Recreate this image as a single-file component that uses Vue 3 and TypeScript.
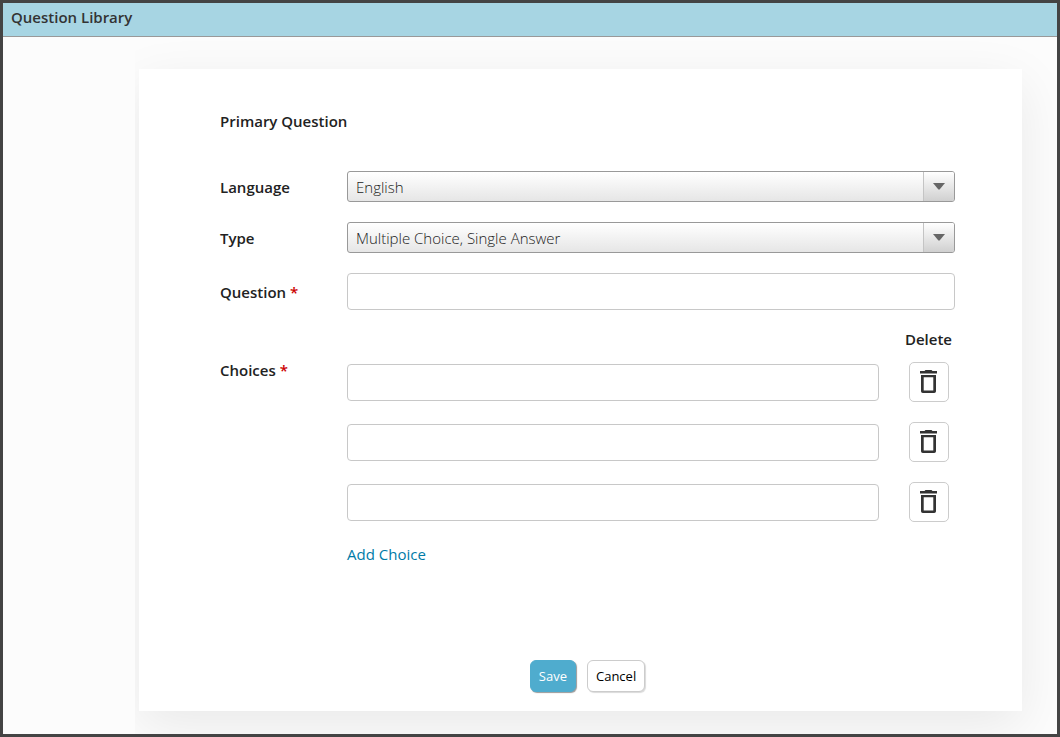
<script setup lang="ts">
import { ref } from 'vue'

interface Choice {
  id: number
  text: string
}

const languages: string[] = ['English', 'French', 'Spanish']
const types: string[] = ['Multiple Choice, Single Answer', 'Multiple Choice, Multiple Answers', 'Free Text']

const language = ref(languages[0])
const questionType = ref(types[0])
const question = ref('')
const choices = ref<Choice[]>([
  { id: 1, text: '' },
  { id: 2, text: '' },
  { id: 3, text: '' },
])
let nextId = 4

function addChoice(): void {
  choices.value.push({ id: nextId++, text: '' })
}

function removeChoice(id: number): void {
  choices.value = choices.value.filter((choice) => choice.id !== id)
}
</script>

<template>
  <div class="window">
    <header class="bar">
      <h1 class="bar-title">Question Library</h1>
    </header>
    <main class="stage">
      <form class="card" @submit.prevent>
        <h2 class="section-title">Primary Question</h2>

        <div class="row">
          <label class="label" for="language">Language</label>
          <div class="select">
            <select id="language" v-model="language">
              <option v-for="item in languages" :key="item">{{ item }}</option>
            </select>
            <span class="arrow" aria-hidden="true">
              <svg width="12" height="7" viewBox="0 0 12 7"><path d="M0 0h12L6.6 6.6h-1.2z" fill="#666" /></svg>
            </span>
          </div>
        </div>

        <div class="row">
          <label class="label" for="type">Type</label>
          <div class="select">
            <select id="type" v-model="questionType">
              <option v-for="item in types" :key="item">{{ item }}</option>
            </select>
            <span class="arrow" aria-hidden="true">
              <svg width="12" height="7" viewBox="0 0 12 7"><path d="M0 0h12L6.6 6.6h-1.2z" fill="#666" /></svg>
            </span>
          </div>
        </div>

        <div class="row">
          <label class="label" for="question">Question <span class="required">*</span></label>
          <input id="question" v-model="question" class="text" type="text" required />
        </div>

        <div class="row choices">
          <span id="choices-label" class="label choices-label">Choices <span class="required">*</span></span>
          <div class="choice-list" role="group" aria-labelledby="choices-label">
            <div class="choice">
              <span class="delete-head">Delete</span>
            </div>
            <div v-for="(choice, index) in choices" :key="choice.id" class="choice">
              <input v-model="choice.text" class="text" type="text" :aria-label="`Choice ${index + 1}`" />
              <button
                class="delete"
                type="button"
                :aria-label="`Delete choice ${index + 1}`"
                @click="removeChoice(choice.id)"
              >
                <svg width="18" height="24" viewBox="0 0 18 24" fill="#333">
                  <path d="M0 1h4.500l1-1h6l1 1H17v2.600H0z" />
                  <path
                    fill-rule="evenodd"
                    d="M1 5h15v16.200a1.800 1.800 0 0 1-1.800 1.800H2.800A1.800 1.800 0 0 1 1 21.200zM3.700 7.300v13.200h9.600V7.300z"
                  />
                </svg>
              </button>
            </div>
            <a class="add" href="#" @click.prevent="addChoice">Add Choice</a>
          </div>
        </div>

        <div class="actions">
          <button class="button primary" type="submit">Save</button>
          <button class="button" type="button">Cancel</button>
        </div>
      </form>
    </main>
  </div>
</template>

<style>
body {
  margin: 0;
}
</style>

<style scoped>
.window,
.window * {
  box-sizing: border-box;
}

.window {
  display: flex;
  flex-direction: column;
  min-height: 100vh;
  border: 3px solid #444;
  background: #fcfcfc;
  color: #333;
  font-family: 'Segoe UI', 'Open Sans', 'Noto Sans', sans-serif;
  font-size: 15px;
  line-height: 24px;
}

.bar {
  height: 34px;
  padding: 2px 8px;
  border-bottom: 1px solid #999;
  background: #a7d5e3;
}

.bar-title,
.section-title {
  margin: 0;
  font-size: 15px;
  font-weight: 600;
}

.stage {
  flex: 1;
  margin-left: 132px;
  padding: 32px 35px 23px 4px;
  overflow: hidden;
}

.card {
  padding: 40px 67px 19px 81px;
  background: #fff;
  box-shadow: 0 15px 50px rgba(0, 0, 0, 0.08);
}

.section-title {
  margin-bottom: 38px;
  font-weight: 700;
}

.row {
  display: grid;
  grid-template-columns: 127px 1fr;
  align-items: center;
  margin-bottom: 20px;
}

.section-title,
.label,
.delete-head {
  font-weight: 600;
  color: #222;
}

.required {
  color: #c00;
}

.select {
  position: relative;
}

.select select {
  display: block;
  width: 100%;
  height: 31px;
  padding: 0 40px 0 8px;
  border: 1px solid #999;
  border-radius: 3px;
  appearance: none;
  background: linear-gradient(#fff, #e6e6e6);
  color: #222;
  font: inherit;
  font-weight: 300;
}

.arrow {
  position: absolute;
  top: 1px;
  right: 1px;
  bottom: 1px;
  display: flex;
  align-items: center;
  justify-content: center;
  width: 31px;
  border-left: 1px solid #c4c4c4;
  border-radius: 0 2px 2px 0;
  background: linear-gradient(#fff, #d0d0d0);
  pointer-events: none;
}

.text {
  width: 100%;
  height: 37px;
  padding: 0 8px;
  border: 1px solid #c8c8c8;
  border-radius: 4px;
  background: #fff;
  color: #333;
  font: inherit;
}

.choices {
  align-items: start;
  margin: -2px 0 0;
}

.choices-label {
  padding-top: 30px;
}

.choice-list {
  display: grid;
}

.choice {
  display: grid;
  grid-template-columns: 1fr 53px;
  column-gap: 23px;
  align-items: center;
  margin-bottom: 20px;
}

.choice:first-child {
  margin-bottom: 12px;
}

.delete-head {
  grid-column: 2;
  line-height: 22px;
  text-align: center;
}

.delete {
  display: flex;
  align-items: center;
  justify-content: center;
  justify-self: center;
  width: 40px;
  height: 40px;
  padding: 0;
  border: 1px solid #ccc;
  border-radius: 5px;
  background: #fff;
}

.add {
  justify-self: start;
  color: #007ba7;
  text-decoration: none;
}

.actions {
  display: flex;
  justify-content: center;
  gap: 11px;
  margin-top: 94px;
}

.button {
  height: 32px;
  padding: 0 8px;
  border: 1px solid #ccc;
  border-radius: 6px;
  background: #fff;
  box-shadow: 1px 1px 1px rgba(0, 0, 0, 0.15);
  color: #000;
  font: inherit;
  font-size: 13px;
}

.primary {
  border-color: #4facce;
  background: #4facce;
  box-shadow: 1px 1px 1px rgba(0, 0, 0, 0.4);
  color: #fff;
}
</style>
